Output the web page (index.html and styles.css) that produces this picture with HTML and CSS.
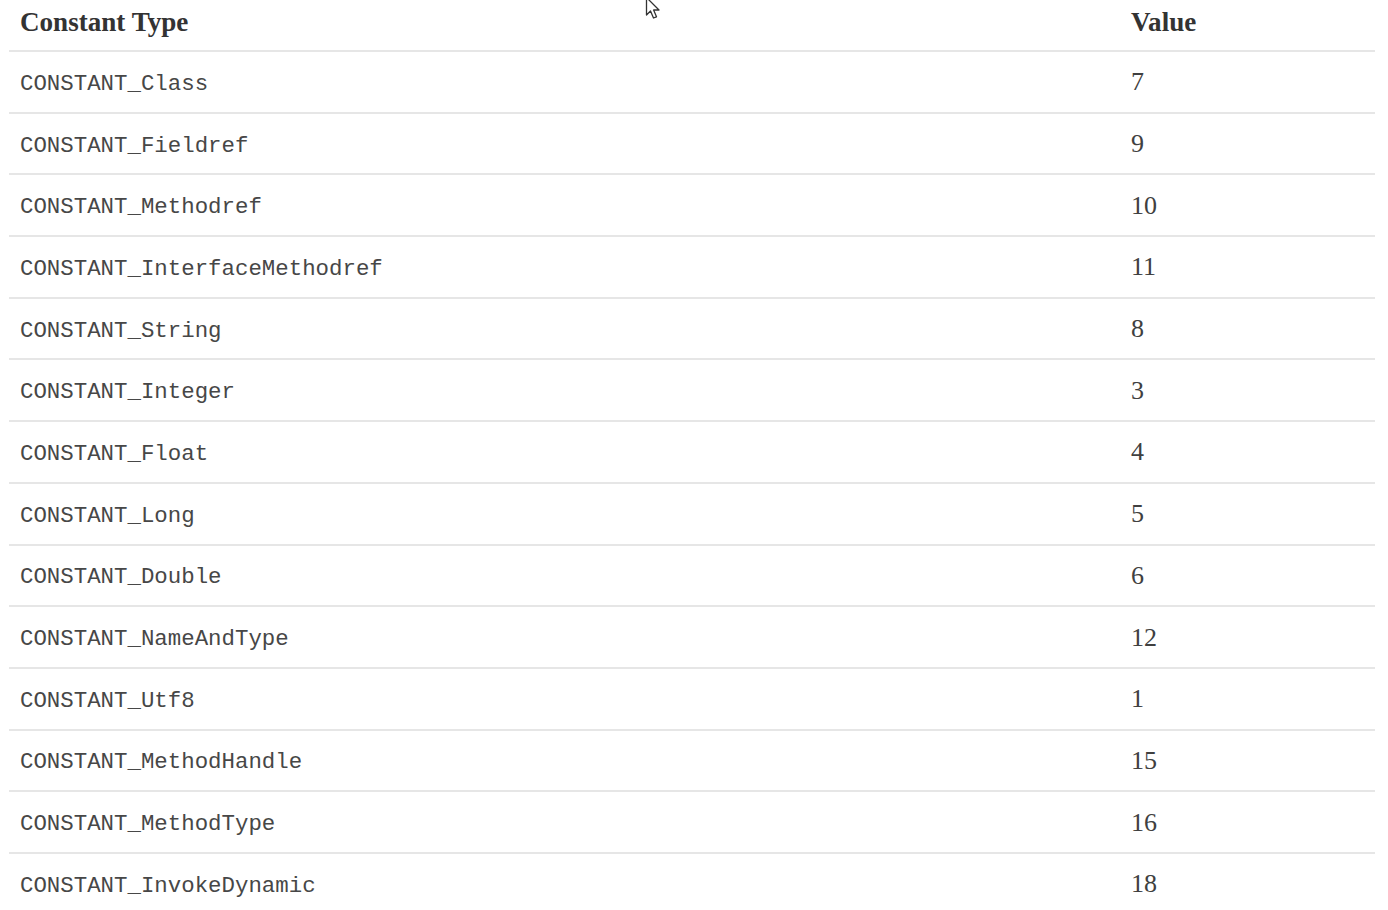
FILE: index.html
```html
<!DOCTYPE html>
<html>
<head>
<meta charset="utf-8">
<link rel="stylesheet" href="styles.css">
</head>
<body>
<table class="constants">
  <thead>
    <tr><th class="col-type">Constant Type</th><th class="col-value">Value</th></tr>
  </thead>
  <tbody>
    <tr><td class="name">CONSTANT_Class</td><td class="num">7</td></tr>
    <tr><td class="name">CONSTANT_Fieldref</td><td class="num">9</td></tr>
    <tr><td class="name">CONSTANT_Methodref</td><td class="num">10</td></tr>
    <tr><td class="name">CONSTANT_InterfaceMethodref</td><td class="num">11</td></tr>
    <tr><td class="name">CONSTANT_String</td><td class="num">8</td></tr>
    <tr><td class="name">CONSTANT_Integer</td><td class="num">3</td></tr>
    <tr><td class="name">CONSTANT_Float</td><td class="num">4</td></tr>
    <tr><td class="name">CONSTANT_Long</td><td class="num">5</td></tr>
    <tr><td class="name">CONSTANT_Double</td><td class="num">6</td></tr>
    <tr><td class="name">CONSTANT_NameAndType</td><td class="num">12</td></tr>
    <tr><td class="name">CONSTANT_Utf8</td><td class="num">1</td></tr>
    <tr><td class="name">CONSTANT_MethodHandle</td><td class="num">15</td></tr>
    <tr><td class="name">CONSTANT_MethodType</td><td class="num">16</td></tr>
    <tr><td class="name">CONSTANT_InvokeDynamic</td><td class="num">18</td></tr>
  </tbody>
</table>
<svg class="cursor" width="20" height="26" viewBox="0 0 20 26">
  <path d="M1.5 1.5 L1.5 19 L5.5 15 L8.5 22 L11.5 20.8 L8.6 14 L14 14 Z" fill="#fff" stroke="#333" stroke-width="1.3" stroke-linejoin="round"/>
</svg>
</body>
</html>
```
FILE: styles.css
```css
html, body {
  margin: 0;
  padding: 0;
  background: #ffffff;
}
body {
  position: relative;
  overflow: hidden;
}
.constants {
  margin-left: 9px;
  width: 1366px;
  border-collapse: separate;
  border-spacing: 0;
  table-layout: fixed;
}
.constants th {
  box-sizing: border-box;
  height: 52px;
  padding: 8px 11px 0;
  vertical-align: top;
  text-align: left;
  font-family: "Liberation Serif", "Times New Roman", serif;
  font-weight: bold;
  font-size: 27.1px;
  line-height: 28px;
  color: #333333;
  border-bottom: 2px solid #e6e6e6;
}
.constants .col-type {
  width: 1111px;
}
.constants td {
  box-sizing: border-box;
  height: 61.7px;
  padding: 0 11px;
  vertical-align: middle;
  border-bottom: 2px solid #e6e6e6;
  color: #404040;
}
.constants .name {
  font-family: "Liberation Mono", "DejaVu Sans Mono", monospace;
  font-size: 22.4px;
  padding-top: 4px;
  color: #474747;
}
.constants .num {
  font-family: "Liberation Serif", "Times New Roman", serif;
  font-size: 26px;
  padding-top: 1px;
}
.cursor {
  position: absolute;
  left: 645px;
  top: -4px;
}
```
